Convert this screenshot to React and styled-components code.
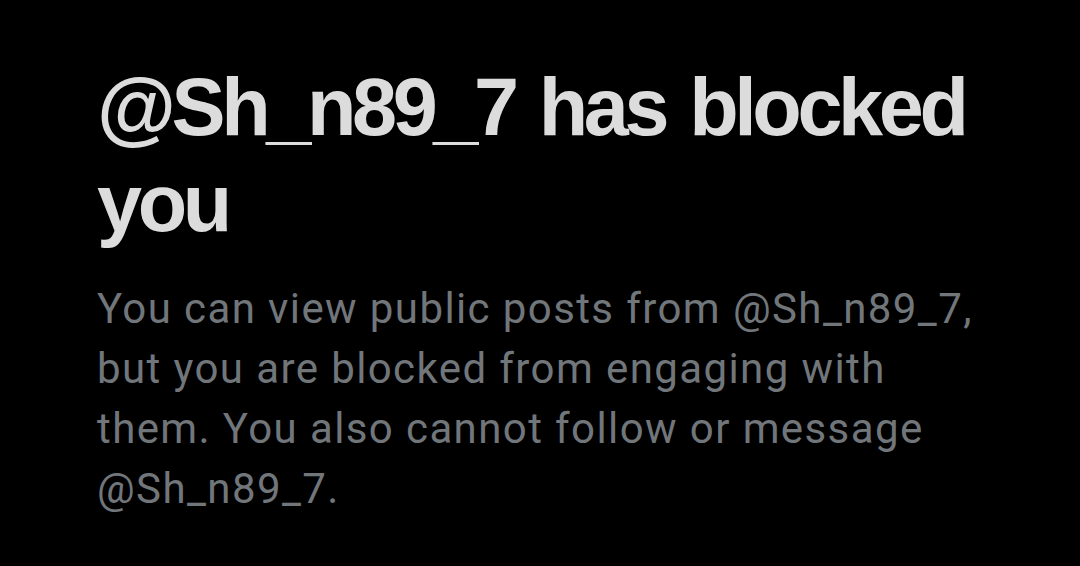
import React from "react";
import styled, { createGlobalStyle } from "styled-components";

const Global = createGlobalStyle`
  html, body { margin: 0; padding: 0; background: #000; }
  body { width: 1080px; height: 566px; overflow: hidden; }
`;

const Page = styled.div`
  width: 1080px;
  height: 566px;
  background: #000;
  box-sizing: border-box;
  padding: 59px 73px 0 97px;
  display: flex;
  flex-direction: column;
  gap: 28px;
`;

const Title = styled.h1`
  margin: 0;
  font-family: "Liberation Sans", Arial, sans-serif;
  font-weight: 700;
  font-size: 81px;
  line-height: 96px;
  color: #dcdcdc;
  letter-spacing: -4.4px;
  word-spacing: 6px;
`;

const Body = styled.p`
  margin: 0;
  font-family: Roboto, "Noto Sans", sans-serif;
  font-weight: 400;
  font-size: 42px;
  line-height: 60px;
  letter-spacing: 1.4px;
  color: #71767b;
`;

export default function App() {
  return (
    <>
      <Global />
      <Page>
        <Title>@Sh_n89_7 has blocked you</Title>
        <Body>
          You can view public posts from @Sh_n89_7, but you are blocked from
          engaging with them. You also cannot follow or message @Sh_n89_7.
        </Body>
      </Page>
    </>
  );
}
